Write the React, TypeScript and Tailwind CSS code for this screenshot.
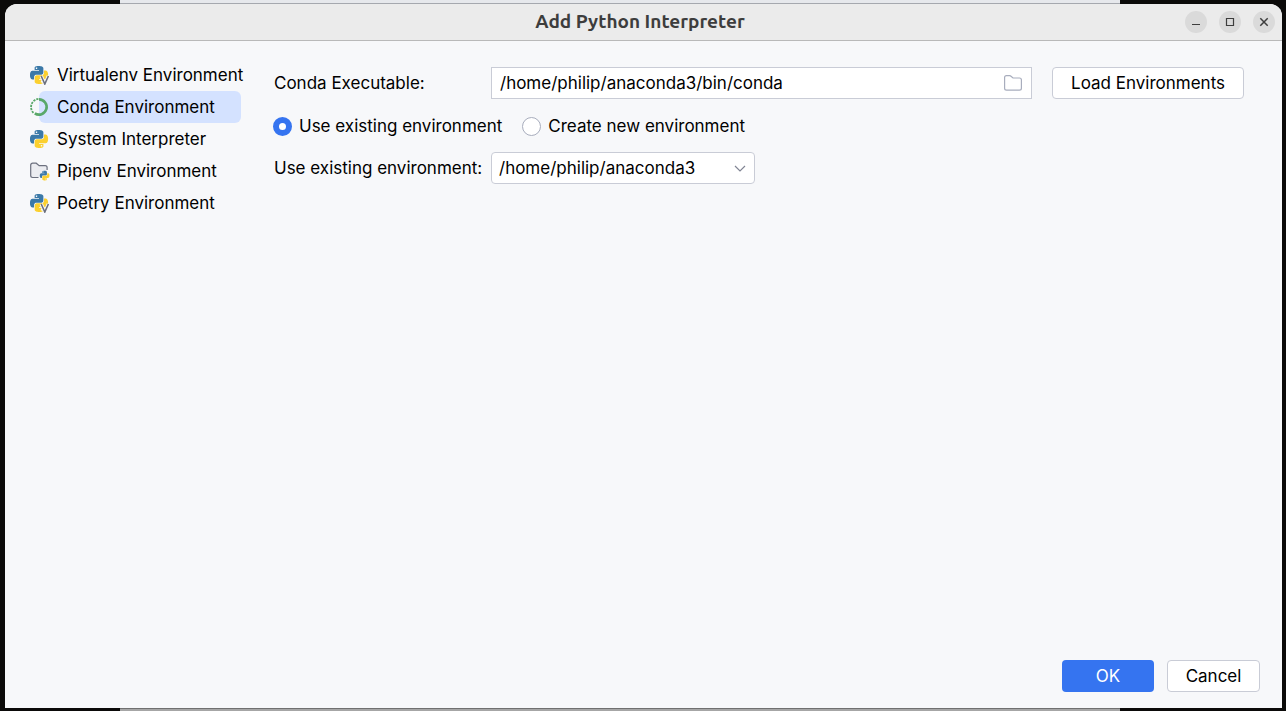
import { useState, type ReactNode } from "react";

function PythonMark() {
  return (
    <>
      <path
        fill="#3b79a8"
        d="M14.25.18l.9.2.73.26.59.3.45.32.34.34.25.34.16.33.1.3.04.26.02.2-.01.13V8.5l-.05.63-.13.55-.21.46-.26.38-.3.31-.33.25-.35.19-.35.14-.33.1-.3.07-.26.04-.21.02H8.77l-.69.05-.59.14-.5.22-.41.27-.33.32-.27.35-.2.36-.15.37-.1.35-.07.32-.04.27-.02.21v3.06H3.17l-.21-.03-.28-.07-.32-.12-.35-.18-.36-.26-.36-.36-.35-.46-.32-.59-.28-.73-.21-.88-.14-1.05-.05-1.23.06-1.22.16-1.04.24-.87.32-.71.36-.57.4-.44.42-.33.42-.24.4-.16.36-.1.32-.05.24-.01h.16l.06.01h8.16v-.83H6.18l-.01-2.75-.02-.37.05-.34.11-.31.17-.28.25-.26.31-.23.38-.2.44-.18.51-.15.58-.12.64-.1.71-.06.77-.04.84-.02 1.27.05zm-6.3 1.98l-.23.33-.08.41.08.41.23.34.33.22.41.09.41-.09.33-.22.23-.34.08-.41-.08-.41-.23-.33-.33-.22-.41-.09-.41.09z"
      />
      <path
        fill="#fbd02f"
        d="M21.1 6.11l.28.06.32.12.35.18.36.27.36.35.35.47.32.59.28.73.21.88.14 1.04.05 1.23-.06 1.23-.16 1.04-.24.86-.32.71-.36.57-.4.45-.42.33-.42.24-.4.16-.36.09-.32.05-.24.02-.16-.01h-8.22v.82h5.84l.01 2.76.02.36-.05.34-.11.31-.17.29-.25.25-.31.24-.38.2-.44.17-.51.15-.58.13-.64.09-.71.07-.77.04-.84.01-1.27-.04-1.07-.14-.9-.2-.73-.25-.59-.3-.45-.33-.34-.34-.25-.34-.16-.33-.1-.3-.04-.25-.02-.2.01-.13v-5.34l.05-.64.13-.54.21-.46.26-.38.3-.32.33-.24.35-.2.35-.14.33-.1.3-.06.26-.04.21-.02.13-.01h5.84l.69-.05.59-.14.5-.21.41-.28.33-.32.27-.35.2-.36.15-.36.1-.35.07-.32.04-.28.02-.21V6.07h2.09l.14.01zm-6.47 14.25l-.23.33-.08.41.08.41.23.33.33.23.41.08.41-.08.33-.23.23-.33.08-.41-.08-.41-.23-.33-.33-.23-.41-.08-.41.08z"
      />
    </>
  );
}

const iconClass = "-ml-[9px] size-5 shrink-0";

function PythonIcon() {
  return (
    <svg className={iconClass} viewBox="0 0 20 20" aria-hidden="true">
      <g transform="translate(0 1) scale(.75)">
        <PythonMark />
      </g>
    </svg>
  );
}

function PythonEnvIcon() {
  return (
    <svg className={iconClass} viewBox="0 0 20 20" aria-hidden="true">
      <g transform="translate(0 1) scale(.75)">
        <PythonMark />
      </g>
      <path d="M11.2 11L14.8 19.2L18.4 11" fill="none" stroke="#f7f8fa" strokeWidth="3.4" />
      <path d="M11.2 11L14.8 19L18.4 11" fill="none" stroke="#6c707e" strokeWidth="1.6" />
    </svg>
  );
}

function CondaIcon() {
  return (
    <svg className={iconClass} viewBox="0 0 20 20" fill="none" stroke="#59a869" aria-hidden="true">
      <path d="M9 2.4A7.6 7.6 0 1 1 4.8 16.3" strokeWidth="2.6" />
      <path d="M8.4 1.9A8.2 8.2 0 0 0 3.6 16" strokeWidth="1.8" strokeDasharray="2.2 1" />
    </svg>
  );
}

function PipenvIcon() {
  return (
    <svg className={iconClass} viewBox="0 0 20 20" fill="none" aria-hidden="true">
      <path
        d="M8.5 16.5H2.6A1.9 1.9 0 0 1 .7 14.6V4.1A1.9 1.9 0 0 1 2.6 2.2H6.2L9.2 4.7H15.2A1.9 1.9 0 0 1 17.1 6.6V9"
        fill="#ebecf0"
        stroke="#6c707e"
        strokeWidth="1.2"
      />
      <g transform="translate(9.8 9.8) scale(.4)">
        <PythonMark />
      </g>
    </svg>
  );
}

const environments: { name: string; icon: ReactNode }[] = [
  { name: "Virtualenv Environment", icon: <PythonEnvIcon /> },
  { name: "Conda Environment", icon: <CondaIcon /> },
  { name: "System Interpreter", icon: <PythonIcon /> },
  { name: "Pipenv Environment", icon: <PipenvIcon /> },
  { name: "Poetry Environment", icon: <PythonEnvIcon /> },
];

function TitleButton({ label, children }: { label: string; children: ReactNode }) {
  return (
    <button type="button" aria-label={label} className="flex size-[22px] items-center justify-center rounded-full bg-[#dadada]">
      <svg className="size-[10px]" viewBox="0 0 10 10" fill="none" stroke="#3d3d3d" aria-hidden="true">
        {children}
      </svg>
    </button>
  );
}

function Radio({ label, checked, onSelect }: { label: string; checked: boolean; onSelect: () => void }) {
  return (
    <label className="flex items-center gap-[7px]">
      <input
        type="radio"
        name="mode"
        checked={checked}
        onChange={onSelect}
        className="size-[19px] appearance-none rounded-full border border-[#a8adbd] bg-white checked:border-[6px] checked:border-[#3574f0]"
      />
      {label}
    </label>
  );
}

export default function App() {
  const [selected, setSelected] = useState("Conda Environment");
  const [mode, setMode] = useState("existing");

  return (
    <div className="flex min-h-screen flex-col bg-[#0b0a09] font-['Inter',sans-serif] text-[17px] leading-6 text-black">
      <div className="mr-[166px] ml-[120px] h-1 border-b border-[#a5a8ae] bg-[#e6e8ec]" />
      <div className="mr-1 ml-[5px] flex flex-1 flex-col overflow-hidden rounded-t-xl bg-[#f7f8fa]">
        <header className="grid h-[37px] grid-cols-[1fr_auto_1fr] items-center border-b border-[#b9b9b9] bg-[#ebebeb] pr-[7px]">
          <h1 className="col-start-2 pb-0.5 font-['Ubuntu','Noto_Sans',sans-serif] text-[19px] leading-5 font-semibold text-[#3d3d3d]">
            Add Python Interpreter
          </h1>
          <div className="flex justify-end gap-3">
            <TitleButton label="Minimize">
              <path d="M1 7.5H9" />
            </TitleButton>
            <TitleButton label="Maximize">
              <path d="M1.5 1.5H8.5V8.5H1.5Z" strokeWidth="1.2" />
            </TitleButton>
            <TitleButton label="Close">
              <path d="M1.3 1.3L8.7 8.7M8.7 1.3L1.3 8.7" strokeWidth="1.5" />
            </TitleButton>
          </div>
        </header>

        <div className="flex flex-1">
          <nav className="w-[269px] shrink-0 pt-[18px] pr-[33px] pl-[34px]">
            {environments.map(({ name, icon }) => (
              <button
                key={name}
                type="button"
                onClick={() => setSelected(name)}
                aria-pressed={selected === name}
                className={`flex h-8 w-full items-center gap-[7px] rounded-md whitespace-nowrap ${
                  selected === name ? "bg-[#d4e2ff]" : ""
                }`}
              >
                {icon}
                {name}
              </button>
            ))}
          </nav>

          <main className="flex flex-1 flex-col pt-[26px] pr-[38px]">
            <div className="flex items-center">
              <label htmlFor="conda" className="w-[217px] shrink-0">
                Conda Executable:
              </label>
              <div className="flex h-8 flex-1 items-center border border-[#c9ccd6] bg-white pr-[9px] pl-2">
                <input id="conda" defaultValue="/home/philip/anaconda3/bin/conda" className="min-w-0 flex-1 outline-none" />
                <button type="button" aria-label="Browse">
                  <svg className="h-4 w-[18px]" viewBox="0 0 18 16" fill="none" stroke="#a8adbd" strokeWidth="1.2" aria-hidden="true">
                    <path d="M.6 2.6A1.9 1.9 0 0 1 2.5.7H5.7A1.9 1.9 0 0 1 7 1.2L9 3H15.5A1.9 1.9 0 0 1 17.4 4.9V13.2A1.9 1.9 0 0 1 15.5 15.1H2.5A1.9 1.9 0 0 1 .6 13.2Z" />
                  </svg>
                </button>
              </div>
              <button type="button" className="ml-5 h-8 rounded-[4px] border border-[#c9ccd6] bg-white px-[18px]">
                Load Environments
              </button>
            </div>

            <div className="mt-[15px] -ml-px flex gap-5">
              <Radio label="Use existing environment" checked={mode === "existing"} onSelect={() => setMode("existing")} />
              <Radio label="Create new environment" checked={mode === "new"} onSelect={() => setMode("new")} />
            </div>

            <div className="mt-[14px] flex items-center">
              <label htmlFor="existing" className="w-[217px] shrink-0">
                Use existing environment:
              </label>
              <div className="grid w-[264px] items-center">
                <select
                  id="existing"
                  className="col-start-1 row-start-1 h-8 appearance-none rounded-[4px] border border-[#c9ccd6] bg-white pl-[7px]"
                >
                  <option>/home/philip/anaconda3</option>
                </select>
                <svg
                  className="pointer-events-none col-start-1 row-start-1 mr-[9px] h-[7px] w-3 justify-self-end"
                  viewBox="0 0 12 7"
                  fill="none"
                  stroke="#818594"
                  strokeWidth="1.2"
                  aria-hidden="true"
                >
                  <path d="M1 1L6 6L11 1" />
                </svg>
              </div>
            </div>
          </main>
        </div>

        <footer className="flex items-center justify-end gap-[13px] pr-[22px] pb-4">
          <button type="button" className="h-8 w-[92px] rounded-[4px] bg-[#3574f0] text-white">
            OK
          </button>
          <button type="button" className="h-8 w-[93px] rounded-[4px] border border-[#c9ccd6] bg-white">
            Cancel
          </button>
        </footer>
      </div>
      <div className="mr-[166px] ml-[120px] h-[3px] border-t border-[#707070] bg-[#a6a6a6]" />
    </div>
  );
}
